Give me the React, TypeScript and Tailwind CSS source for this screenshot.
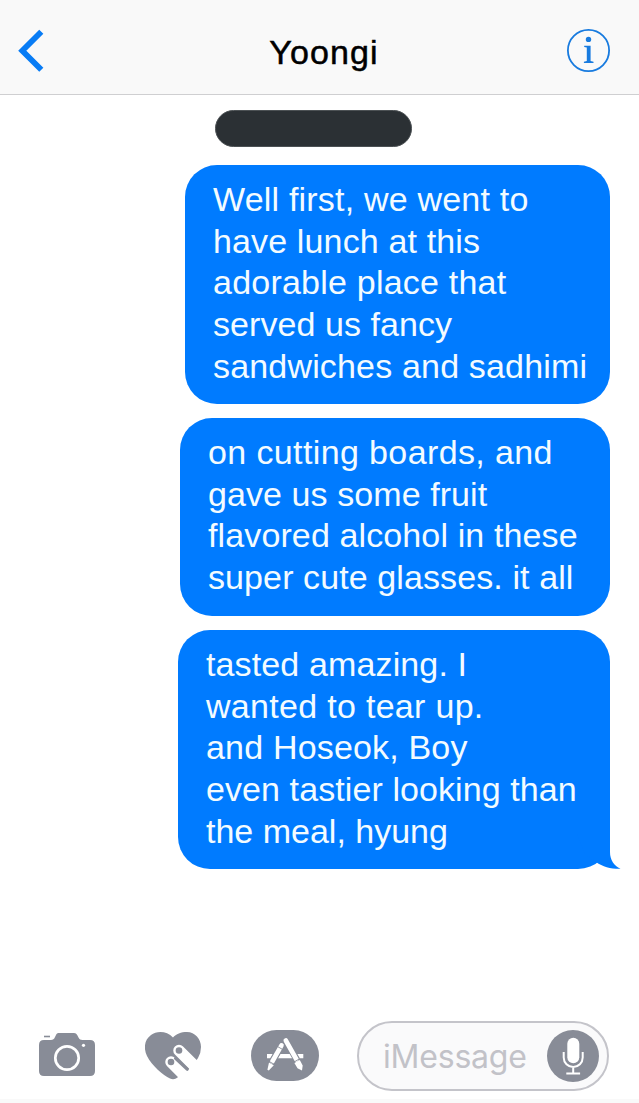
type Line = { text: string; tracking: string };

const messages: { box: string; lines: Line[]; tail?: boolean }[] = [
  {
    box: "w-[425px] h-[239px]",
    lines: [
      { text: "Well first, we went to", tracking: "tracking-[0.2px]" },
      { text: "have lunch at this", tracking: "tracking-[0.14px]" },
      { text: "adorable place that", tracking: "tracking-[0.22px]" },
      { text: "served us fancy", tracking: "tracking-[0.06px]" },
      { text: "sandwiches and sadhimi", tracking: "tracking-[0.17px]" },
    ],
  },
  {
    box: "w-[430px] h-[198px]",
    lines: [
      { text: "on cutting boards, and", tracking: "tracking-[0.38px]" },
      { text: "gave us some fruit", tracking: "tracking-[0.08px]" },
      { text: "flavored alcohol in these", tracking: "tracking-[0.12px]" },
      { text: "super cute glasses. it all", tracking: "tracking-[0.1px]" },
    ],
  },
  {
    box: "w-[432px] h-[239px]",
    tail: true,
    lines: [
      { text: "tasted amazing. I", tracking: "tracking-[0.13px]" },
      { text: "wanted to tear up.", tracking: "tracking-[0.3px]" },
      { text: "and Hoseok, Boy", tracking: "tracking-[0.18px]" },
      { text: "even tastier looking than", tracking: "tracking-[0.09px]" },
      { text: "the meal, hyung", tracking: "tracking-[0px]" },
    ],
  },
];

function Header() {
  return (
    <header className="flex h-[95px] shrink-0 items-start justify-between border-b border-[#cfcfd1] bg-[#f9f9f9] pl-[18px] pr-[29px]">
      <button aria-label="Back" className="mt-[29px] w-[43px]">
        <svg width="26" height="43" viewBox="0 0 26 43" fill="none" stroke="#087cf5" strokeWidth="5.8" strokeLinejoin="miter">
          <path d="M23.300 2.700L4.300 21.700L23.300 40.700" />
        </svg>
      </button>
      <h1 className="mt-[32px] pl-[20px] text-[34px] leading-[40px] tracking-[1.1px] text-black [-webkit-text-stroke:0.5px_black]">
        Yoongi
      </h1>
      <button aria-label="Details" className="mt-[29px]">
        <svg width="43" height="43" viewBox="0 0 43 43">
          <circle cx="21.5" cy="21.5" r="20.6" fill="none" stroke="#187bdf" strokeWidth="1.8" />
          <circle cx="21.5" cy="10.4" r="2.7" fill="#187bdf" />
          <path d="M17.200 16.800h6.400v15.300l2.900.6v1.300h-9.600v-1.300l2.900-.6V18.600l-2.600-.5z" fill="#187bdf" />
        </svg>
      </button>
    </header>
  );
}

function Bubble({ box, lines, tail }: (typeof messages)[number]) {
  return (
    <div className={`relative rounded-[32px] bg-[#007bff] pl-[28px] pt-[14px] ${box}`}>
      {lines.map((line) => (
        <p key={line.text} className={`whitespace-nowrap text-[34px] leading-[41.7px] text-[#f3fbff] ${line.tracking}`}>
          {line.text}
        </p>
      ))}
      {tail && (
        <svg className="absolute -bottom-px -right-[11px]" width="44" height="36" viewBox="0 0 44 36">
          <path d="M0 0H33V18C33 26 37 32 43.5 34.8C34 35 26 33 19 28L8 20Z" fill="#007bff" />
        </svg>
      )}
    </div>
  );
}

function Composer() {
  return (
    <footer className="flex h-[82px] shrink-0 items-start border-b-4 border-[#f9f9f9] pl-[39px]">
      <svg className="mt-[12px] mr-[50px] shrink-0" width="56" height="44" viewBox="0 0 56 44">
        <path d="M5 7h7c2 0 3-.8 4-3l1-2c.7-1.500 1.500-2 3-2h15c1.500 0 2.500.7 3.200 2l1.300 2.600C40.500 6.400 41.500 7 43.500 7H51q5 0 5 5v26q0 5-5 5H5q-5 0-5-5V12q0-5 5-5z" fill="#888c97" />
        <path d="M5 3.500h6" stroke="#888c97" strokeWidth="1.600" />
        <circle cx="28" cy="25" r="11.700" fill="none" stroke="#fff" strokeWidth="2.700" />
        <circle cx="44.500" cy="12.300" r="1.600" fill="#fff" />
      </svg>
      <svg className="mt-[11px] mr-[50px] shrink-0" width="56" height="49" viewBox="0 0 56 49">
        <path d="M28 5.500C22-1 12-1.500 6 3C-1 8-1.500 17 2 24C7 34 18 43 25 46.500Q28 48 31 46.500C40 41 48 34 53 26Q56 21 56 15C56 7 50 0 42 0C36 0 31 2 28 5.500Z" fill="#888c97" />
        <path d="M34 18.500L60 44.500M26 30L50 54" stroke="#fff" strokeWidth="11.500" strokeLinecap="round" />
        <path d="M30.500 26.500L42.300 37.300" stroke="#888c97" strokeWidth="3" strokeLinecap="round" />
        <circle cx="34" cy="18.500" r="3.300" fill="#888c97" />
        <circle cx="26" cy="30" r="3.300" fill="#888c97" />
      </svg>
      <svg className="mt-[9px] mr-[38px] shrink-0" width="68" height="51" viewBox="0 0 68 51">
        <rect width="68" height="51" rx="25.500" fill="#888c97" />
        <path d="M16 24h36.300v4.300H16z" fill="#fff" />
        <path d="M30.700 15L21.500 31M34.800 10.500L46 30" stroke="#888c97" strokeWidth="6.600" />
        <path d="M34.800 10.500L45.500 29.500" stroke="#fff" strokeWidth="4.600" strokeLinecap="round" />
        <path d="M30.700 15.300L21.300 31.500" stroke="#888c97" strokeWidth="6.400" />
        <path d="M30.500 15.300L21.300 31.500" stroke="#fff" strokeWidth="4.600" strokeLinecap="round" />
        <path d="M18 32.500l4.800 2.700-5 5.300-1.400-.8zM43.400 33l5.400-3 2.900 5.500-.7 5-4.500-2.300z" fill="#fff" />
        <path d="M27 16.800l5 2.900M18.300 31.500l5.500 3.200M42.500 32.300l5.800-3.300" stroke="#888c97" strokeWidth=".9" />
      </svg>
      <div className="flex h-[70px] w-[252px] items-center justify-between rounded-full border-2 border-[#c4c4ca] bg-[#fafafb] pl-[24px] pr-[8px]">
        <span className="pt-[2px] font-[Inter] text-[32px] font-normal leading-[40px] tracking-[-0.2px] text-[#c2c2c8]">iMessage</span>
        <svg className="shrink-0" width="52" height="52" viewBox="0 0 52 52">
          <circle cx="26" cy="26" r="26" fill="#888c97" />
          <rect x="20.300" y="7.800" width="12" height="25.500" rx="6" fill="#fff" />
          <path d="M16.700 22v5.500a9.500 9.500 0 0 0 19 0V22M26.200 37v6.300M19.300 43.500h13.800" fill="none" stroke="#fff" strokeWidth="2" />
        </svg>
      </div>
    </footer>
  );
}

export default function App() {
  return (
    <div className="flex h-[1103px] w-[639px] flex-col overflow-hidden bg-white font-['Liberation_Sans',Arial,sans-serif]">
      <Header />
      <main className="flex flex-1 flex-col pt-[15px]">
        <div className="ml-[215px] h-[37px] w-[197px] rounded-full border border-[#4c5154] bg-[#2b3034]" />
        <div className="mt-[18px] flex flex-col items-end gap-[14px] pr-[29px]">
          {messages.map((message) => (
            <Bubble key={message.lines[0].text} {...message} />
          ))}
        </div>
      </main>
      <Composer />
    </div>
  );
}
